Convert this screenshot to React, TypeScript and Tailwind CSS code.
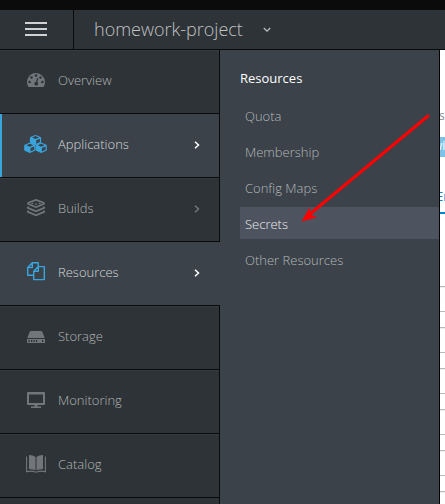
import React from "react";

type IconProps = { className?: string };

const Gauge = ({ className }: IconProps) => (
  <svg className={className} width="18" height="14" viewBox="0 0 18 14" fill="currentColor">
    <path
      fillRule="evenodd"
      d="M9 0a9 9 0 0 1 9 9c0 1.800-.5 3.400-1.400 4.700-.2.200-.4.300-.7.300H2.100c-.3 0-.5-.1-.7-.3A9 9 0 0 1 9 0ZM2.600 7.700a1.300 1.300 0 1 0 0 2.600 1.300 1.300 0 0 0 0-2.600Zm1.900-4.500a1.300 1.300 0 1 0 0 2.600 1.300 1.300 0 0 0 0-2.600ZM9 1.300a1.300 1.300 0 1 0 0 2.600 1.300 1.300 0 0 0 0-2.600Zm4.500 1.900a1.300 1.300 0 1 0 0 2.600 1.300 1.300 0 0 0 0-2.600Zm1.900 4.500a1.300 1.300 0 1 0 0 2.600 1.300 1.300 0 0 0 0-2.600Zm-5.300-2.800-1 3.900a1.900 1.900 0 1 0 1.200.3l1-3.900Z"
    />
  </svg>
);

const Cube = ({ x, y }: { x: number; y: number }) => (
  <g transform={`translate(${x} ${y})`}>
    <path
      fillRule="evenodd"
      d="M5.600 0 10.700 2.100 11.200 2.800V7.400L10.700 8.200 5.600 10.400 .5 8.200 0 7.400V2.800L.5 2.100ZM5.600 1.200 2.100 2.700 5.600 4.200 9.100 2.700ZM6.300 5.400V8.900L10 7.200V3.800Z"
    />
  </g>
);

const Cubes = ({ className }: IconProps) => (
  <svg className={className} width="24" height="18" viewBox="0 0 24 18" fill="currentColor">
    <Cube x={5.900} y={-0.100} />
    <Cube x={0.200} y={7.600} />
    <Cube x={11.600} y={7.600} />
  </svg>
);

const Layers = ({ className }: IconProps) => (
  <svg className={className} width="18" height="18" viewBox="0 0 18 18" fill="none" stroke="currentColor" strokeWidth="1.700">
    <path d="M9 .9 16.800 3.800V4.900L9 8.200 1.200 4.900V3.800Z" />
    <path d="M4.500 4.300h1.800M8.100 5.200h1.800M11.700 4.300h1.800" strokeWidth="1.200" />
    <path d="M.9 7.400V8.900L9 12.300 17.100 8.900V7.400" />
    <path d="M.9 11.400V12.900L9 16.300 17.100 12.900V11.400" />
  </svg>
);

const Files = ({ className }: IconProps) => (
  <svg className={className} width="18" height="20" viewBox="0 0 18 20" fill="none" stroke="currentColor" strokeWidth="1.400" strokeLinejoin="round">
    <path d="M6.700 13.300H.7V5.500L5.300.7h5.900V4.600M5.300.7v4.800H.7" />
    <path d="M11.300 4.600h6v13H6.700V9.300ZM11.300 4.600v4.700H6.700" />
  </svg>
);

const Drive = ({ className }: IconProps) => (
  <svg className={className} width="18" height="14" viewBox="0 -2 18 14" fill="currentColor">
    <path d="M3.800 0h10.400c.5 0 .8.200 1 .6L17.700 7H.3L2.800.6c.2-.4.500-.6 1-.6Z" />
    <path
      fillRule="evenodd"
      d="M0 8h18v3.400c0 .4-.2.600-.6.600H.6c-.4 0-.6-.2-.6-.6ZM1.500 9v2h1.300V9Zm2.500 0v2h1.300V9Zm2.500 0v2h1.300V9ZM9 9v2h1.300V9Zm6 0v2h1.300V9Z"
    />
  </svg>
);

const Screen = ({ className }: IconProps) => (
  <svg className={className} width="18" height="16" viewBox="0 0 18 16" fill="currentColor">
    <path fillRule="evenodd" d="M.7 0h16.600c.4 0 .7.300.7.700v11.600c0 .4-.3.700-.7.700H.7c-.4 0-.7-.3-.7-.7V.7C0 .3.300 0 .7 0ZM2 2.500v8.500h14V2.500Z" />
    <path d="M7.500 13h3v1.500h3.500V16H4v-1.500h3.500Z" />
  </svg>
);

const Catalog = ({ className }: IconProps) => (
  <svg className={className} width="20" height="18" viewBox="0 0 20 18" fill="currentColor">
    <path d="M3 0c2.800.1 5 .7 6.500 2v13.500C7.900 14.500 5.700 14.100 3 14ZM17 0c-2.800.1-5 .7-6.500 2v13.500c1.600-1 3.800-1.400 6.500-1.500Z" />
    <path d="M.6 1.500v15.200c3.400-.8 6.500-.7 8.500.3h1.800c2-1 5.100-1.100 8.500-.3V1.500" fill="none" stroke="currentColor" strokeWidth="1.100" />
  </svg>
);

const Chevron = ({ className }: IconProps) => (
  <svg className={className} width="6" height="8" viewBox="0 0 6 8" fill="none" stroke="currentColor" strokeWidth="1.500">
    <path d="m1 .7 3.500 3.300L1 7.300" />
  </svg>
);

type Item = {
  label: string;
  Icon: (p: IconProps) => React.JSX.Element;
  state?: "active" | "open";
  arrow?: boolean;
};

const items: Item[] = [
  { label: "Overview", Icon: Gauge },
  { label: "Applications", Icon: Cubes, state: "active", arrow: true },
  { label: "Builds", Icon: Layers, arrow: true },
  { label: "Resources", Icon: Files, state: "open", arrow: true },
  { label: "Storage", Icon: Drive },
  { label: "Monitoring", Icon: Screen },
  { label: "Catalog", Icon: Catalog },
];

const resources = ["Quota", "Membership", "Config Maps", "Secrets", "Other Resources"];

function NavItem({ label, Icon, state, arrow }: Item) {
  const lit = state !== undefined;
  const edge =
    state === "active"
      ? "border-r border-r-[#080a0c] bg-[#3b4249]"
      : state === "open"
        ? "bg-[#3b4249]"
        : "border-r border-r-[#080a0c] bg-[#2e3337] shadow-[inset_0_1px_0_#363b3f]";
  return (
    <li className={`relative flex h-16 shrink-0 items-center border-b border-b-[#080a0c] ${edge}`}>
      {state === "active" && <span className="absolute inset-y-0 left-0 w-[2px] bg-[#39a5dc]" />}
      <span className={`ml-[25px] flex w-[22px] justify-center pb-[3px] ${lit ? "text-[#39a5dc]" : "text-[#72767b]"}`}>
        <Icon className="shrink-0" />
      </span>
      <span className={`ml-[11px] pb-[4px] text-[13px] leading-5 ${lit ? "text-[#d6d8da]" : "text-[#b0b3b5]"}`}>{label}</span>
      {arrow && (
        <span className={`ml-auto pb-[1px] ${state === "open" ? "pr-[20px]" : "pr-[19px]"} ${lit ? "text-white" : "text-[#72767b]"}`}>
          <Chevron />
        </span>
      )}
    </li>
  );
}

export default function App() {
  return (
    <div className="relative flex h-[504px] w-[445px] flex-col overflow-hidden bg-white font-['Open_Sans',sans-serif] font-light">
      <div className="h-[10px] shrink-0 bg-[#0b0b0b]" />
      <header className="flex h-10 shrink-0 border-b border-[#080a0c] bg-[#2e3337]">
        <button className="flex w-[74px] flex-col items-start gap-1 border-r border-[#080a0c] pt-3 pl-[25px]">
          <span className="h-[2px] w-[22px] bg-[#d1d1d1]" />
          <span className="h-[2px] w-[22px] bg-[#d1d1d1]" />
          <span className="h-[2px] w-[22px] bg-[#d1d1d1]" />
        </button>
        <div className="flex items-center pl-5 text-[18px] text-[#c0c2c4]">
          <span className="pb-px">homework-project</span>
          <svg className="ml-5" width="8" height="6" viewBox="0 0 8 6" fill="none" stroke="currentColor" strokeWidth="1.200">
            <path d="m.8 1 3.200 3.200L7.200 1" />
          </svg>
        </div>
      </header>

      <div className="flex min-h-0 flex-1">
        <ul className="flex w-[220px] shrink-0 flex-col overflow-hidden bg-[#2e3337]">
          {items.map((item) => (
            <NavItem key={item.label} {...item} />
          ))}
          <li className="flex-1 border-r border-[#080a0c]" />
        </ul>

        <nav className="w-[220px] shrink-0 border-r border-[#030303] bg-[#3b4249] pl-5">
          <h2 className="pt-[18px] text-[13px] leading-5 font-normal text-white">Resources</h2>
          <ul className="mt-[11px] flex flex-col gap-1">
            {resources.map((name) => (
              <li
                key={name}
                className={`h-8 pl-[5px] text-[13px] leading-[34px] ${name === "Secrets" ? "bg-[#4d5460] text-[#eeeeee]" : "text-[#b4b7b9]"}`}
              >
                {name}
              </li>
            ))}
          </ul>
        </nav>

        <main className="w-[5px] overflow-hidden bg-white font-normal">
          <div className="mt-[58px] flex h-4 w-2 items-center text-[12px] leading-4 text-[#8b8d8f]">
            <span className="-ml-px">s</span>
          </div>
          <div className="mt-[13px] flex h-5 bg-[#7dc3e8] text-[12px] leading-[18px] whitespace-nowrap text-white">
            <span className="-ml-[7px]">wi</span>
          </div>
          <div className="mt-[29px] flex h-5 text-[13px] leading-5 whitespace-nowrap text-[#0088ce]">
            <span className="-ml-[4px]">En</span>
          </div>
          <div className="mt-[6px] h-[2px] bg-[#0088ce]" />
          <div className="mt-[72px] flex flex-col">
            {[0, 1, 2, 3, 4, 5].map((row) => (
              <div key={row} className="h-[41px] shrink-0">
                <div className="h-[26px] border-y border-[#b9b9b9] shadow-[inset_0_1px_1px_#eeeeee]" />
              </div>
            ))}
          </div>
        </main>
      </div>

      <svg className="pointer-events-none absolute inset-0" width="445" height="504" viewBox="0 0 445 504">
        <path d="M428 116 310 214" stroke="#ff0000" strokeWidth="3" strokeLinecap="round" />
        <path d="M301.500 221.500 309.500 207.500 310.500 214.500 317 217.300Z" fill="#ff0000" />
      </svg>
    </div>
  );
}
